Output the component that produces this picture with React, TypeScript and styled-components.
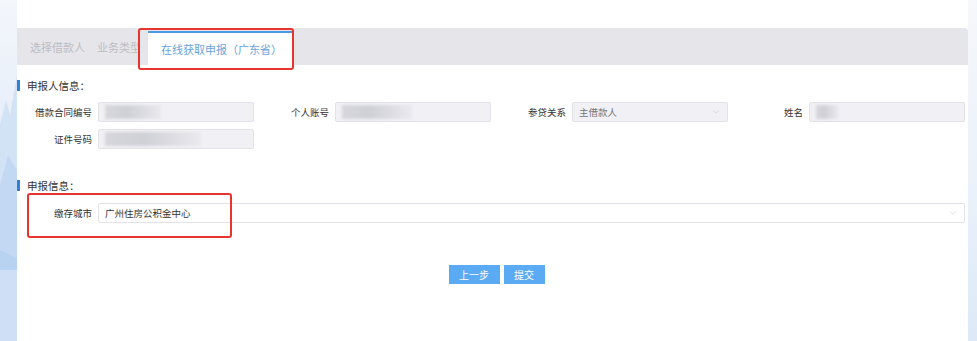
import * as React from "react";
import styled, {createGlobalStyle} from "styled-components";
import {ChevronDown} from "lucide-react";

const GlobalStyle = createGlobalStyle`
    html, body {
        margin: 0;
        padding: 0;
        background: #ffffff;
    }
    body {
        font-family: "Noto Sans CJK SC", "Noto Sans", sans-serif;
        color: #333333;
    }
`;

const Page = styled.div`
    display: grid;
    grid-template-columns: 17px 1fr 9px;
    width: 977px;
    height: 341px;
    overflow: hidden;
`;

const SideArt = styled.div`
    background: linear-gradient(180deg, #f3f6fb 0%, #e6eef9 40%, #d8e6f7 70%, #e0ebf9 100%);
    overflow: hidden;
`;

const RightEdge = styled.div`
    background: linear-gradient(180deg, #f5f8fc 0%, #ebf2fa 50%, #dde9f7 100%);
`;

const Main = styled.div`
    display: flex;
    flex-direction: column;
    padding-top: 28px;
    background: #ffffff;
`;

const TabBar = styled.div`
    display: flex;
    align-items: stretch;
    height: 37px;
    background: #e6e6ea;
    border-top-right-radius: 4px;
`;

const Tab = styled.div<{ $active?: boolean }>`
    position: relative;
    display: flex;
    align-items: center;
    padding: 0 ${p => p.$active ? "10px" : "6px"};
    margin-left: ${p => p.$active ? "1px" : "0"};
    font-size: 11px;
    color: ${p => p.$active ? "#6aa3dc" : "#bdbdc3"};
    background: ${p => p.$active ? "#ffffff" : "transparent"};
    border-top: ${p => p.$active ? "2px solid #4a98e6" : "none"};
    margin-top: ${p => p.$active ? "3px" : "0"};
    white-space: nowrap;
    overflow: hidden;
    &:first-child {
        padding-left: 13px;
    }
`;

const Mark = styled.div`
    position: absolute;
    box-sizing: border-box;
    border: 2px solid #e8342e;
    border-radius: 3px;
    pointer-events: none;
`;

const TabWrap = styled.div`
    position: relative;
    display: flex;
`;

const Section = styled.div`
    display: flex;
    flex-direction: column;
`;

const SectionTitle = styled.div<{ $top: number; $bottom: number }>`
    display: flex;
    align-items: center;
    gap: 7px;
    height: 12px;
    font-size: 10.5px;
    color: #333;
    margin: ${p => p.$top}px 0 ${p => p.$bottom}px 0;
    &::before {
        content: "";
        width: 3px;
        height: 11px;
        background: #2f7fd8;
    }
`;

const FieldGrid = styled.div`
    display: grid;
    grid-template-columns: repeat(4, 1fr);
    row-gap: 7px;
    padding-right: 3px;
`;

const Field = styled.div<{ $span?: number }>`
    position: relative;
    display: grid;
    grid-template-columns: 75px 1fr;
    column-gap: 6px;
    align-items: center;
    grid-column: span ${p => p.$span || 1};
`;

const Label = styled.div`
    text-align: right;
    font-size: 9.5px;
    color: #333;
`;

const Box = styled.div<{ $plain?: boolean }>`
    position: relative;
    display: flex;
    align-items: center;
    justify-content: space-between;
    height: 20px;
    box-sizing: border-box;
    padding: 0 6px;
    font-size: 9.5px;
    color: #333;
    background: ${p => p.$plain ? "#ffffff" : "#f1f1f5"};
    border: 1px solid #e2e2e8;
    border-radius: 2px;
    overflow: hidden;
`;

const Value = styled.span<{ $muted?: boolean }>`
    color: ${p => p.$muted ? "#777" : "#333"};
`;

const Blur = styled.div<{ $w: number }>`
    width: ${p => p.$w}px;
    height: 14px;
    background: linear-gradient(90deg, #d6d6dc 0%, #cfcfd6 40%, #dcdce2 70%, #e9e9ee 100%);
    filter: blur(1.5px);
`;

const Actions = styled.div`
    display: flex;
    justify-content: center;
    gap: 4px;
    margin-top: 42px;
    padding-left: 8px;
`;

const Button = styled.button<{ $w: number }>`
    width: ${p => p.$w}px;
    height: 19px;
    border: none;
    padding: 0;
    background: #5aaaf4;
    color: #ffffff;
    font-family: inherit;
    font-size: 10px;
`;

const Chevron = () => <ChevronDown size={10} color="#c4c4cc" strokeWidth={1.5}/>;

const Side = () => (
    <SideArt>
        <svg width="17" height="341" viewBox="0 0 17 341">
            <path d="M0 125 L6 100 L10 115 L17 75 L17 341 L0 341 Z" fill="#d3e3f6"/>
            <path d="M0 185 L8 155 L17 170 L17 341 L0 341 Z" fill="#c3d9f3"/>
            <path d="M0 250 L17 258 L17 341 L0 341 Z" fill="#b8d3f2"/>
            <rect x="0" y="270" width="17" height="71" fill="#cfe0f6"/>
        </svg>
    </SideArt>
);

export default function App() {
    return (
        <Page>
            <GlobalStyle/>
            <Side/>
            <Main>
                <TabBar>
                    <Tab>选择借款人</Tab>
                    <Tab>业务类型</Tab>
                    <TabWrap>
                        <Tab $active>在线获取申报（广东省）</Tab>
                        <Mark style={{left: -9, top: 0, right: -2, bottom: -5}}/>
                    </TabWrap>
                </TabBar>

                <SectionTitle $top={14} $bottom={11}>申报人信息：</SectionTitle>
                <Section>
                    <FieldGrid>
                        <Field>
                            <Label>借款合同编号</Label>
                            <Box><Blur $w={56}/></Box>
                        </Field>
                        <Field>
                            <Label>个人账号</Label>
                            <Box><Blur $w={70}/></Box>
                        </Field>
                        <Field>
                            <Label>参贷关系</Label>
                            <Box><Value $muted>主借款人</Value><Chevron/></Box>
                        </Field>
                        <Field>
                            <Label>姓名</Label>
                            <Box><Blur $w={22}/></Box>
                        </Field>
                        <Field>
                            <Label>证件号码</Label>
                            <Box><Blur $w={96}/></Box>
                        </Field>
                    </FieldGrid>
                </Section>

                <SectionTitle $top={30} $bottom={12}>申报信息：</SectionTitle>
                <Section>
                    <FieldGrid>
                        <Field $span={4}>
                            <Label>缴存城市</Label>
                            <Box $plain><Value>广州住房公积金中心</Value><Chevron/></Box>
                            <Mark style={{left: 10, top: -10, width: 205, bottom: -15}}/>
                        </Field>
                    </FieldGrid>
                </Section>

                <Actions>
                    <Button $w={51}>上一步</Button>
                    <Button $w={41}>提交</Button>
                </Actions>
            </Main>
            <RightEdge/>
        </Page>
    );
}
